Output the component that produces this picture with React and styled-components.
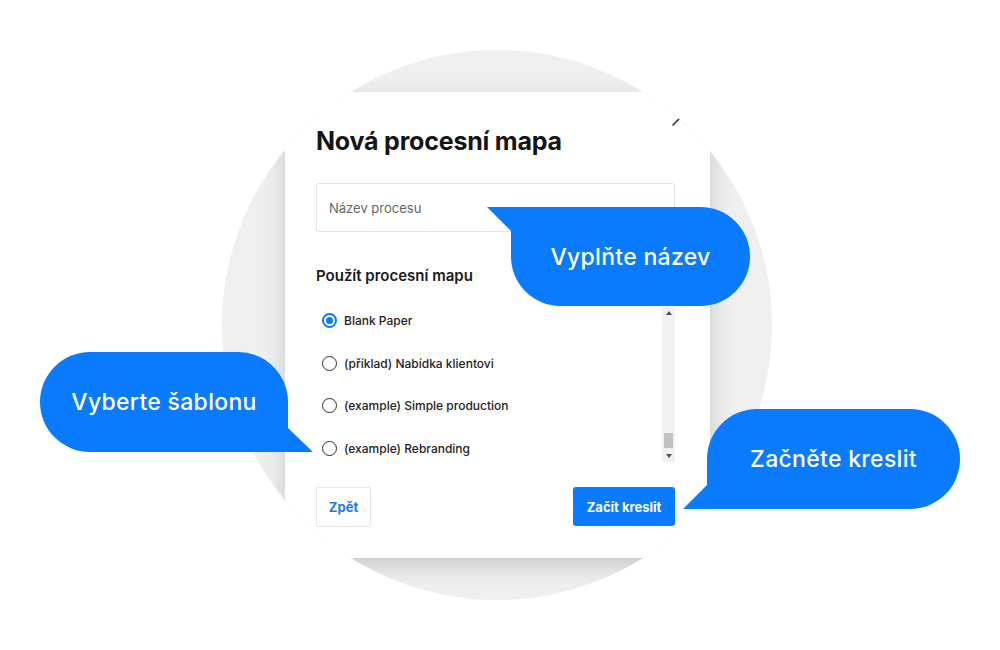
import React from "react";
import styled, { createGlobalStyle } from "styled-components";

const BLUE = "#0a7aff";

const GlobalStyle = createGlobalStyle`
  html, body { margin: 0; padding: 0; background: #ffffff; }
  body { font-family: Inter, "Noto Sans", "Liberation Sans", sans-serif; }
  * { box-sizing: border-box; }
`;

const Stage = styled.div`
  position: relative;
  width: 1000px;
  height: 650px;
  padding: 50px 0 0 222px;
  background: #ffffff;
  overflow: hidden;
`;

const Circle = styled.div`
  width: 550px;
  height: 550px;
  border-radius: 50%;
  background: #efefef;
  overflow: hidden;
  padding: 42px 0 0 63px;
`;

const Card = styled.div`
  position: relative;
  width: 425px;
  height: 466px;
  background: #ffffff;
  box-shadow: 0 8px 22px rgba(0, 0, 0, 0.16);
  padding: 34px 35px 0 31px;
  display: flex;
  flex-direction: column;
`;

const CloseIcon = styled.svg`
  position: absolute;
  top: 18px;
  right: 22px;
  width: 16px;
  height: 16px;
`;

const Title = styled.h1`
  margin: 0;
  font-size: 25px;
  line-height: 30px;
  font-weight: 700;
  color: #141414;
  letter-spacing: -0.2px;
`;

const NameInput = styled.input`
  margin-top: 27px;
  height: 49px;
  width: 100%;
  border: 1px solid #e3e3e3;
  border-radius: 3px;
  padding: 0 12px;
  font-family: inherit;
  font-size: 13px;
  color: #333;
  outline: none;
  &::placeholder { color: #666; }
`;

const SectionTitle = styled.h2`
  margin: 34px 0 0;
  font-size: 15px;
  line-height: 20px;
  font-weight: 600;
  color: #1a1a1a;
`;

const ListWrap = styled.div`
  margin-top: 21px;
  height: 155px;
  display: flex;
`;

const Options = styled.div`
  flex: 1;
  display: flex;
  flex-direction: column;
  gap: 15px;
  padding-left: 6px;
`;

const OptionRow = styled.label`
  height: 28px;
  display: flex;
  align-items: center;
  gap: 7px;
  font-size: 12px;
  font-weight: 500;
  color: #222;
`;

const Radio = styled.span`
  width: 15px;
  height: 15px;
  border-radius: 50%;
  border: ${(p) => (p.$checked ? `2px solid ${BLUE}` : "1.5px solid #2b2b2b")};
  display: flex;
  align-items: center;
  justify-content: center;
  flex-shrink: 0;
  &::after {
    content: "";
    width: 7px;
    height: 7px;
    border-radius: 50%;
    background: ${(p) => (p.$checked ? BLUE : "transparent")};
  }
`;

const Scrollbar = styled.div`
  width: 13px;
  background: #f1f1f1;
  display: flex;
  flex-direction: column;
`;

const ArrowBox = styled.div`
  height: 12px;
  display: flex;
  align-items: center;
  justify-content: center;
  &::after {
    content: "";
    border-left: 3px solid transparent;
    border-right: 3px solid transparent;
    ${(p) => (p.$down ? "border-top: 4px solid #505050;" : "border-bottom: 4px solid #505050;")}
  }
`;

const Track = styled.div`
  flex: 1;
  display: flex;
  flex-direction: column;
  justify-content: flex-end;
  align-items: center;
`;

const Thumb = styled.div`
  width: 9px;
  height: 15px;
  margin-bottom: 2px;
  background: #c1c1c1;
`;

const Footer = styled.div`
  margin-top: 25px;
  display: flex;
  justify-content: space-between;
  align-items: flex-start;
`;

const BackButton = styled.button`
  width: 55px;
  height: 40px;
  background: #fff;
  border: 1px solid #e6e6e6;
  border-radius: 2px;
  color: #1d78f2;
  font-family: inherit;
  font-size: 13px;
  font-weight: 700;
`;

const StartButton = styled.button`
  width: 102px;
  height: 39px;
  background: ${BLUE};
  border: none;
  border-radius: 3px;
  color: #fff;
  font-family: inherit;
  font-size: 13px;
  font-weight: 700;
`;

const Bubble = styled.div`
  position: absolute;
  left: ${(p) => p.$left}px;
  top: ${(p) => p.$top}px;
  width: ${(p) => p.$width}px;
  height: ${(p) => p.$height}px;
  padding: ${(p) => p.$pad};
  display: flex;
  align-items: center;
  justify-content: center;
`;

const BubbleShape = styled.svg`
  position: absolute;
  inset: 0;
  width: 100%;
  height: 100%;
`;

const BubbleText = styled.span`
  position: relative;
  color: #fff;
  font-size: 23px;
  font-weight: 500;
  letter-spacing: 0.3px;
`;

function SpeechBubble({ left, top, width, height, pad, path, children }) {
  return (
    <Bubble $left={left} $top={top} $width={width} $height={height} $pad={pad}>
      <BubbleShape viewBox={`0 0 ${width} ${height}`}>
        <path d={path} fill={BLUE} />
      </BubbleShape>
      <BubbleText>{children}</BubbleText>
    </Bubble>
  );
}

const options = [
  { label: "Blank Paper", checked: true },
  { label: "(příklad) Nabídka klientovi" },
  { label: "(example) Simple production" },
  { label: "(example) Rebranding" },
];

export default function App() {
  return (
    <>
      <GlobalStyle />
      <Stage>
        <Circle>
          <Card>
            <CloseIcon viewBox="0 0 16 16">
              <path d="M1 1 L15 15 M15 1 L1 15" stroke="#333" strokeWidth="1.6" strokeLinecap="round" />
            </CloseIcon>
            <Title>Nová procesní mapa</Title>
            <NameInput placeholder="Název procesu" />
            <SectionTitle>Použít procesní mapu</SectionTitle>
            <ListWrap>
              <Options>
                {options.map((o) => (
                  <OptionRow key={o.label}>
                    <Radio $checked={o.checked} />
                    {o.label}
                  </OptionRow>
                ))}
              </Options>
              <Scrollbar>
                <ArrowBox />
                <Track>
                  <Thumb />
                </Track>
                <ArrowBox $down />
              </Scrollbar>
            </ListWrap>
            <Footer>
              <BackButton>Zpět</BackButton>
              <StartButton>Začít kreslit</StartButton>
            </Footer>
          </Card>
        </Circle>

        <SpeechBubble
          left={487}
          top={207}
          width={263}
          height={99}
          pad="0 0 0 24px"
          path="M0 0 H213.5 A49.5 49.5 0 0 1 213.5 99 H73.5 A49.5 49.5 0 0 1 24 49.5 V24 Z"
        >
          Vyplňte název
        </SpeechBubble>

        <SpeechBubble
          left={40}
          top={352}
          width={273}
          height={100}
          pad="0 25px 0 0"
          path="M50 0 H198 A50 50 0 0 1 248 50 V76 L273 100 H50 A50 50 0 0 1 50 0 Z"
        >
          Vyberte šablonu
        </SpeechBubble>

        <SpeechBubble
          left={683}
          top={409}
          width={277}
          height={100}
          pad="0 0 0 24px"
          path="M74 0 H227 A50 50 0 0 1 227 100 H0 L24 76 V50 A50 50 0 0 1 74 0 Z"
        >
          Začněte kreslit
        </SpeechBubble>
      </Stage>
    </>
  );
}
